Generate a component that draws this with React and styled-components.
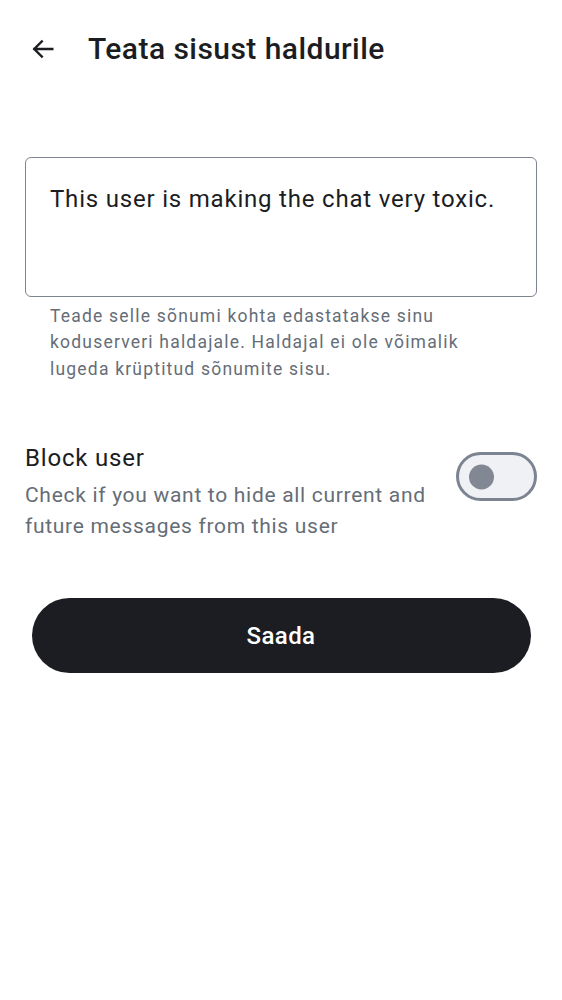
import styled, { createGlobalStyle } from "styled-components";
import { useState } from "react";

const GlobalStyle = createGlobalStyle`
  html, body {
    margin: 0;
    padding: 0;
    background: #ffffff;
    font-family: Roboto, "Noto Sans", sans-serif;
    color: #1b1d22;
  }
`;

/* Teata sisust haldurile – report content screen */
function App() {
  const [block, setBlock] = useState(false);

  return (
    <Page>
      <GlobalStyle />
      <TopBar>
        <BackButton aria-label="Tagasi">
          <svg width="28" height="28" viewBox="0 0 24 24" fill="none">
            <path
              d="M20 12H4.5M11 5.5L4.5 12l6.5 6.5"
              stroke="#1b1d22"
              strokeWidth="2"
              strokeLinecap="square"
            />
          </svg>
        </BackButton>
        <Title>Teata sisust haldurile</Title>
      </TopBar>

      <Content>
        <Field>
          <ReasonBox>This user is making the chat very toxic.</ReasonBox>
          <Helper>
            Teade selle sõnumi kohta edastatakse sinu koduserveri haldajale. Haldajal ei ole võimalik
            lugeda krüptitud sõnumite sisu.
          </Helper>
        </Field>

        <BlockRow>
          <BlockText>
            <BlockTitle>Block user</BlockTitle>
            <BlockDesc>Check if you want to hide all current and future messages from this user</BlockDesc>
          </BlockText>
          <Switch $on={block} onClick={() => setBlock(!block)}>
            <Thumb $on={block} />
          </Switch>
        </BlockRow>

        <SendButton>Saada</SendButton>
      </Content>
    </Page>
  );
}

export default App;

const Page = styled.div`
  width: 562px;
  min-height: 1000px;
  background: #ffffff;
`;

const TopBar = styled.div`
  display: flex;
  align-items: center;
  height: 36px;
  padding: 31px 0 0 29px;
`;

const BackButton = styled.button`
  display: flex;
  align-items: center;
  justify-content: center;
  width: 28px;
  height: 28px;
  padding: 0;
  border: none;
  background: none;
  margin-right: 31px;
`;

const Title = styled.h1`
  margin: 0;
  font-size: 30px;
  line-height: 36px;
  font-weight: 500;
  letter-spacing: 0.45px;
  color: #1b1d22;
`;

const Content = styled.div`
  display: flex;
  flex-direction: column;
  padding: 90px 25px 0 25px;
`;

const Field = styled.div`
  display: flex;
  flex-direction: column;
`;

const ReasonBox = styled.div`
  box-sizing: border-box;
  height: 140px;
  padding: 25px 24px;
  border: 1.5px solid #7d8490;
  border-radius: 6px;
  font-size: 24px;
  line-height: 32px;
  letter-spacing: 0.8px;
  color: #1b1d22;
`;

const Helper = styled.p`
  margin: 5.5px 0 0 0;
  padding: 0 50px 0 25px;
  font-size: 17.5px;
  line-height: 26.5px;
  letter-spacing: 1.2px;
  color: #656d77;
`;

const BlockRow = styled.div`
  display: flex;
  align-items: flex-start;
  justify-content: space-between;
  margin-top: 60px;
`;

const BlockText = styled.div`
  display: flex;
  flex-direction: column;
  max-width: 420px;
`;

const BlockTitle = styled.div`
  font-size: 24px;
  line-height: 32px;
  letter-spacing: 0.8px;
  color: #1b1d22;
`;

const BlockDesc = styled.div`
  margin-top: 6px;
  font-size: 21px;
  line-height: 31px;
  letter-spacing: 0.7px;
  color: #656d77;
`;

const Switch = styled.button`
  box-sizing: border-box;
  position: relative;
  flex-shrink: 0;
  width: 81px;
  height: 49px;
  margin-top: 10px;
  padding: 0;
  border: 3px solid ${(p) => (p.$on ? "#1b1d22" : "#7c8391")};
  border-radius: 25px;
  background: ${(p) => (p.$on ? "#1b1d22" : "#f0f1f4")};
  cursor: pointer;
`;

const Thumb = styled.span`
  position: absolute;
  top: 50%;
  left: ${(p) => (p.$on ? "44px" : "10px")};
  width: 25px;
  height: 25px;
  border-radius: 50%;
  transform: translateY(-50%);
  background: ${(p) => (p.$on ? "#ffffff" : "#818793")};
`;

const SendButton = styled.button`
  align-self: center;
  width: 499px;
  height: 75px;
  margin-top: 56px;
  border: none;
  border-radius: 38px;
  background: #1b1d22;
  color: #ffffff;
  font-family: Roboto, "Noto Sans", sans-serif;
  font-size: 24px;
  font-weight: 500;
  letter-spacing: 0.4px;
  cursor: pointer;
`;
